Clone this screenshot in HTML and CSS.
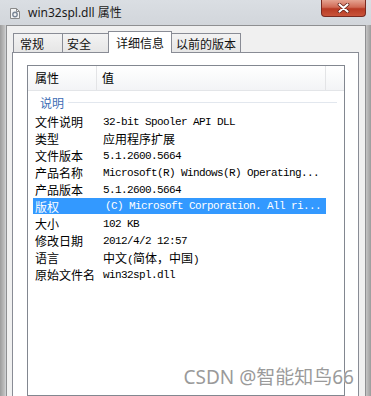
FILE: index.html
```html
<!DOCTYPE html>
<html lang="zh-CN">
<head>
  <meta charset="UTF-8" />
  <title>win32spl.dll 属性</title>
  <link rel="stylesheet" href="styles.css">
</head>
<body>
  <div class="window">
    <div class="titlebar">
      <svg class="app-icon" width="10" height="11" viewBox="0 0 10 11">
        <path d="M0.5 0.5 H6.5 L9.5 3.5 V10.5 H0.5 Z" fill="#f4f4f4" stroke="#8a8a8a"/>
        <path d="M6.5 0.5 V3.5 H9.5" fill="none" stroke="#8a8a8a"/>
        <circle cx="5" cy="6.5" r="2.2" fill="none" stroke="#7c8796" stroke-width="1.4"/>
      </svg>
      <span class="title">win32spl.dll 属性</span>
      <div class="close-btn">
        <svg width="13" height="10" viewBox="0 0 13 10">
          <path d="M2.5 1.5 L10.5 8.5 M10.5 1.5 L2.5 8.5" stroke="#5a1a12" stroke-width="3.6" stroke-linecap="round"/>
          <path d="M2.5 1.5 L10.5 8.5 M10.5 1.5 L2.5 8.5" stroke="#ffffff" stroke-width="2.2" stroke-linecap="round"/>
        </svg>
      </div>
    </div>

    <div class="client">
      <div class="tabs">
        <div class="tab tab-general">常规</div>
        <div class="tab tab-security">安全</div>
        <div class="tab tab-details active">详细信息</div>
        <div class="tab tab-previous">以前的版本</div>
      </div>

      <div class="tab-panel">
        <div class="listview">
          <div class="lv-header">
            <div class="col-name">属性</div>
            <div class="col-value">值</div>
            <div class="col-rest"></div>
          </div>

          <div class="group">
            <span>说明</span>
            <i class="group-line"></i>
          </div>

          <div class="row"><span class="name">文件说明</span><span class="value mono">32-bit Spooler API DLL</span></div>
          <div class="row"><span class="name">类型</span><span class="value">应用程序扩展</span></div>
          <div class="row"><span class="name">文件版本</span><span class="value mono">5.1.2600.5664</span></div>
          <div class="row"><span class="name">产品名称</span><span class="value mono">Microsoft(R) Windows(R) Operating...</span></div>
          <div class="row"><span class="name">产品版本</span><span class="value mono">5.1.2600.5664</span></div>
          <div class="row selected"><span class="name">版权</span><span class="value mono">(C) Microsoft Corporation. All ri...</span></div>
          <div class="row"><span class="name">大小</span><span class="value mono">102 KB</span></div>
          <div class="row"><span class="name">修改日期</span><span class="value mono">2012/4/2 12:57</span></div>
          <div class="row"><span class="name">语言</span><span class="value">中文<span class="mono">(</span>简体，中国<span class="mono">)</span></span></div>
          <div class="row"><span class="name">原始文件名</span><span class="value mono">win32spl.dll</span></div>
        </div>
      </div>
    </div>

    <div class="watermark">CSDN @智能知鸟66</div>
  </div>
</body>
</html>
```

FILE: styles.css
```css
body {
  margin: 0;
  width: 371px;
  height: 396px;
  overflow: hidden;
  font-family: "Noto Sans CJK SC", "Noto Sans", sans-serif;
  font-size: 12px;
  color: #000;
}

.window {
  position: relative;
  height: 396px;
  overflow: hidden;
  background: linear-gradient(to right, #9c9c9c 0, #c4c4c4 5px, #d6dadf 6px, #d6dadf 365px, #c4c4c4 366px, #9c9c9c 100%);
}

.titlebar {
  display: flex;
  align-items: center;
  height: 25px;
  padding: 0 5px 0 10px;
  background: linear-gradient(#dadee3, #d2d6db);
}

.app-icon {
  flex: none;
  margin-top: 1px;
}

.title {
  margin-left: 8px;
  font-family: "Noto Sans", "Noto Sans CJK SC", sans-serif;
  font-size: 12px;
  color: #1b1b1b;
  line-height: 1;
}

.close-btn {
  margin-left: auto;
  align-self: flex-start;
  width: 45px;
  height: 17px;
  display: flex;
  align-items: center;
  justify-content: center;
  box-sizing: border-box;
  border: 1px solid #7a2a20;
  border-top: none;
  border-radius: 0 0 4px 4px;
  background: linear-gradient(#e5a391, #d06a55 45%, #b83a24 55%, #c9543a);
}

.client {
  margin: 0 5px 0 6px;
  height: 371px;
  box-sizing: border-box;
  padding: 5px 6px 0 5px;
  border: 1px solid #8e8f91;
  border-bottom: none;
  background: #f0f0f0;
}

.tabs {
  display: flex;
  align-items: flex-end;
  height: 21px;
  padding-left: 1px;
}

.tab {
  position: relative;
  box-sizing: border-box;
  height: 19px;
  padding: 2px 0 0 5px;
  line-height: 16px;
  border: 1px solid #898c95;
  border-bottom: none;
  background: linear-gradient(#f3f3f3, #e6e6e6);
  color: #111;
}

.tab + .tab {
  margin-left: -1px;
}

.tab-general { width: 50px; padding-left: 6px; }
.tab-security { width: 47px; padding-left: 4px; }
.tab-details { width: 64px; padding-left: 7px; }
.tab-previous { width: 70px; padding-left: 4px; }

.tab.active {
  z-index: 1;
  height: 22px;
  margin-bottom: -1px;
  padding-top: 3px;
  background: #fff;
}

.tab-panel {
  height: 344px;
  box-sizing: border-box;
  border: 1px solid #898c95;
  border-bottom: none;
  background: #fff;
  padding: 12px 0 0 14px;
}

.listview {
  width: 318px;
  height: 331px;
  box-sizing: border-box;
  border: 1px solid #828790;
}

.lv-header {
  display: flex;
  height: 24px;
  border-bottom: 1px solid #e3e5e8;
  background: linear-gradient(#ffffff, #f3f4f6);
  line-height: 24px;
}

.col-name {
  width: 69px;
  box-sizing: border-box;
  padding-left: 7px;
  border-right: 1px solid #e3e4e6;
}

.col-value {
  width: 229px;
  box-sizing: border-box;
  padding-left: 5px;
  border-right: 1px solid #e3e4e6;
}

.col-rest {
  flex: 1;
}

.group {
  display: flex;
  align-items: center;
  height: 22px;
  padding: 0 7px 0 12px;
  color: #3d6db5;
}

.group-line {
  flex: 1;
  height: 1px;
  margin-left: 4px;
  background: #e2e7ee;
}

.row {
  display: flex;
  align-items: center;
  width: 293px;
  height: 17px;
  margin-left: 5px;
  white-space: nowrap;
}

.row .name {
  width: 64px;
  box-sizing: border-box;
  padding-left: 2px;
}

.row .value {
  padding-left: 6px;
}

.row.selected .value {
  padding-left: 8px;
}

.mono {
  font-family: "Liberation Mono", "Noto Sans CJK SC", monospace;
  font-size: 11px;
  letter-spacing: -0.6px;
}

.row.selected {
  height: 16px;
  margin-bottom: 1px;
  background: #3399ff;
  color: #fff;
}

.watermark {
  position: absolute;
  right: 17px;
  bottom: 8px;
  font-family: "Noto Sans", "Noto Sans CJK SC", sans-serif;
  font-size: 19px;
  line-height: 1.1;
  color: #9a9a9a;
  text-shadow: 0 0 1px #fff;
  letter-spacing: 0;
}
```
